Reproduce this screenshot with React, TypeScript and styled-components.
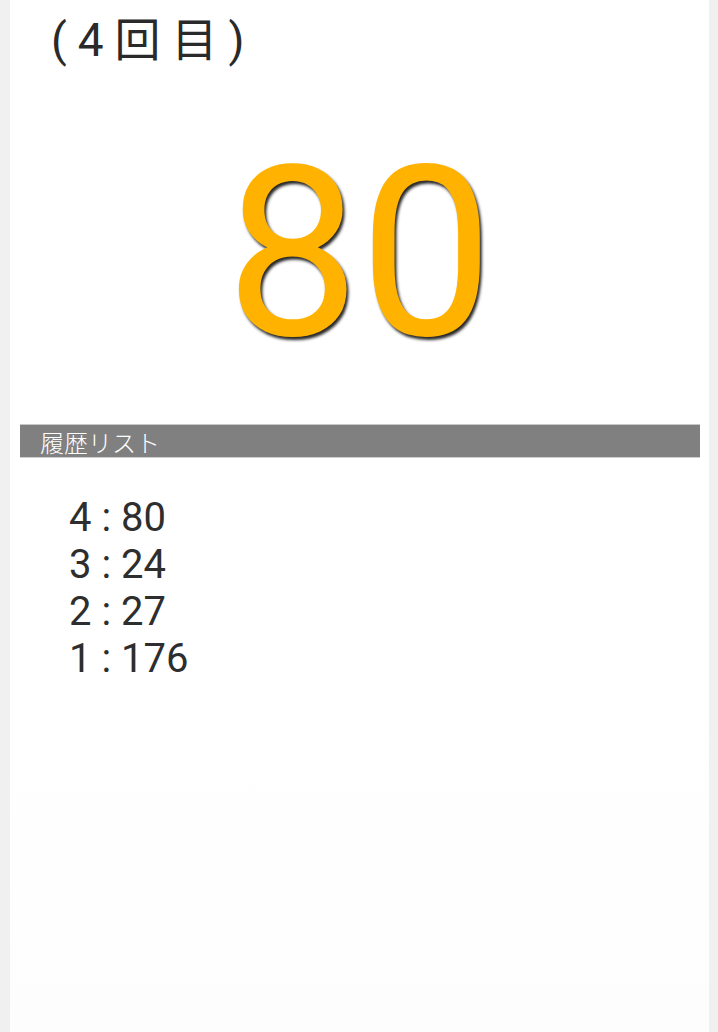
import React from "react";
import styled, { createGlobalStyle } from "styled-components";

const GlobalStyle = createGlobalStyle`
  html, body {
    margin: 0;
    padding: 0;
    background: #f0f0f0;
  }
`;

const history = [
  { round: 4, value: 80 },
  { round: 3, value: 24 },
  { round: 2, value: 27 },
  { round: 1, value: 176 },
];

export default function App() {
  return (
    <>
      <GlobalStyle />
      <Page>
        <Title>(4回目)</Title>
        <BigNumber>80</BigNumber>
        <SectionBar>
          <SectionLabel>履歴リスト</SectionLabel>
        </SectionBar>
        <HistoryList>
          {history.map((h) => (
            <HistoryItem key={h.round}>
              {h.round} : {h.value}
            </HistoryItem>
          ))}
        </HistoryList>
      </Page>
    </>
  );
}

const Page = styled.div`
  margin: 0 9px 0 10px;
  min-height: 1032px;
  background: linear-gradient(#ffffff 70%, #fdfdfd);
  display: flex;
  flex-direction: column;
  font-family: Roboto, "Noto Sans CJK JP", sans-serif;
`;

const Title = styled.div`
  padding: 10px 0 0 41px;
  height: 60px;
  font-size: 46px;
  line-height: 60px;
  color: #2a2a2a;
  letter-spacing: 11px;
`;

const BigNumber = styled.div`
  margin-top: 41px;
  height: 286px;
  text-align: center;
  font-size: 238px;
  line-height: 286px;
  color: #ffb300;
  text-shadow: 2px 3px 3px rgba(0, 0, 0, 0.85);
`;

const SectionBar = styled.div`
  margin: 27px 9px 0 10px;
  height: 32px;
  background: #808080;
  border-top: 1px solid #c8c8c8;
  border-bottom: 1px solid #d0d0d0;
  display: flex;
  align-items: center;
`;

const SectionLabel = styled.span`
  padding-left: 20px;
  font-size: 24px;
  color: #ffffff;
  font-family: "Noto Sans CJK JP", sans-serif;
  font-weight: 300;
`;

const HistoryList = styled.div`
  padding: 36px 0 0 59px;
  display: flex;
  flex-direction: column;
`;

const HistoryItem = styled.div`
  font-size: 40px;
  line-height: 47px;
  color: #2e2e2e;
`;
